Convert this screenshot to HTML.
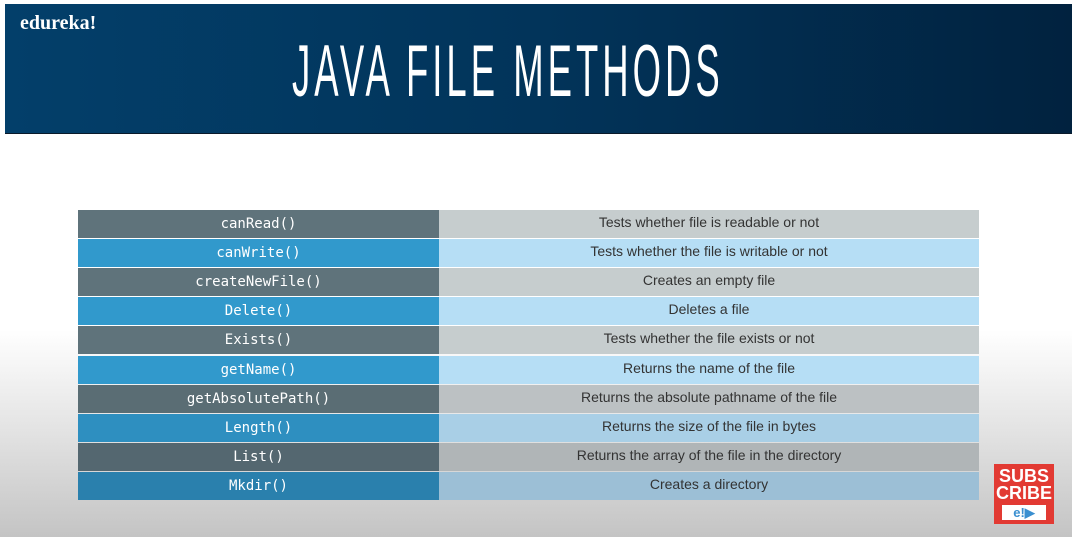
<!DOCTYPE html>
<html><head><style>
html,body{margin:0;padding:0}
body{width:1072px;height:537px;overflow:hidden;position:relative;font-family:"Liberation Sans",sans-serif;
background:linear-gradient(to bottom,#fff 0px,#fff 330px,#e6e6e6 420px,#c4c4c4 537px);}
.banner{position:absolute;left:5px;top:4px;width:1067px;height:129px;background:linear-gradient(to right,#033f6a,#02345a 50%,#01223f);border-bottom:1px solid #0a1a2a}
.logo{position:absolute;left:20px;top:12px;color:#fff;font-family:"Liberation Serif",serif;font-weight:bold;font-size:20px}
.title{position:absolute;left:292px;top:30px;color:#fff;font-size:73px;white-space:nowrap;transform:scaleX(0.5);transform-origin:left top;letter-spacing:8px}
.row{position:absolute;left:78px;width:901px;height:28px;display:flex;font-size:14px}
.row .l{width:361px;display:flex;align-items:center;justify-content:center;color:#fff;font-family:"DejaVu Sans Mono","Liberation Mono",monospace;font-size:14px}
.row .r{flex:1;display:flex;align-items:center;justify-content:center;color:#333;padding-bottom:4px;box-sizing:border-box}
.g .l{background:#5f737b}.g .r{background:#c6cdce}
.b .l{background:#3199cc}.b .r{background:#b6def5}
.sub{position:absolute;left:994px;top:464px;width:60px;height:60px;background:#e23a33;color:#fff;font-weight:bold;font-size:18px;line-height:17px;text-align:center}
.sub .e{margin:3px auto 0;width:44px;height:15px;background:#fff;color:#3a8fd0;font-size:13px;line-height:15px}
</style></head><body>
<div class="banner"></div>
<div class="logo">edureka!</div>
<div class="title">JAVA FILE METHODS</div>

<div class="row g" style="top:210px"><div class="l">canRead()</div><div class="r">Tests whether file is readable or not</div></div>
<div class="row b" style="top:239px"><div class="l">canWrite()</div><div class="r">Tests whether the file is writable or not</div></div>
<div class="row g" style="top:268px"><div class="l">createNewFile()</div><div class="r">Creates an empty file</div></div>
<div class="row b" style="top:297px"><div class="l">Delete()</div><div class="r">Deletes a file</div></div>
<div class="row g" style="top:326px"><div class="l">Exists()</div><div class="r">Tests whether the file exists or not</div></div>
<div class="row b" style="top:356px"><div class="l">getName()</div><div class="r">Returns the name of the file</div></div>
<div class="row g" style="top:385px;"><div class="l" style="background:#5a6d74">getAbsolutePath()</div><div class="r" style="background:#bcc1c3">Returns the absolute pathname of the file</div></div>
<div class="row b" style="top:414px"><div class="l" style="background:#2e8fc0">Length()</div><div class="r" style="background:#a9cfe6">Returns the size of the file in bytes</div></div>
<div class="row g" style="top:443px"><div class="l" style="background:#546770">List()</div><div class="r" style="background:#b0b5b7">Returns the array of the file in the directory</div></div>
<div class="row b" style="top:472px"><div class="l" style="background:#2a80ad">Mkdir()</div><div class="r" style="background:#9cbfd6">Creates a directory</div></div>

<div class="sub"><div style="padding-top:4px">SUBS<br>CRIBE</div><div class="e">e!▶</div></div>
</body></html>
